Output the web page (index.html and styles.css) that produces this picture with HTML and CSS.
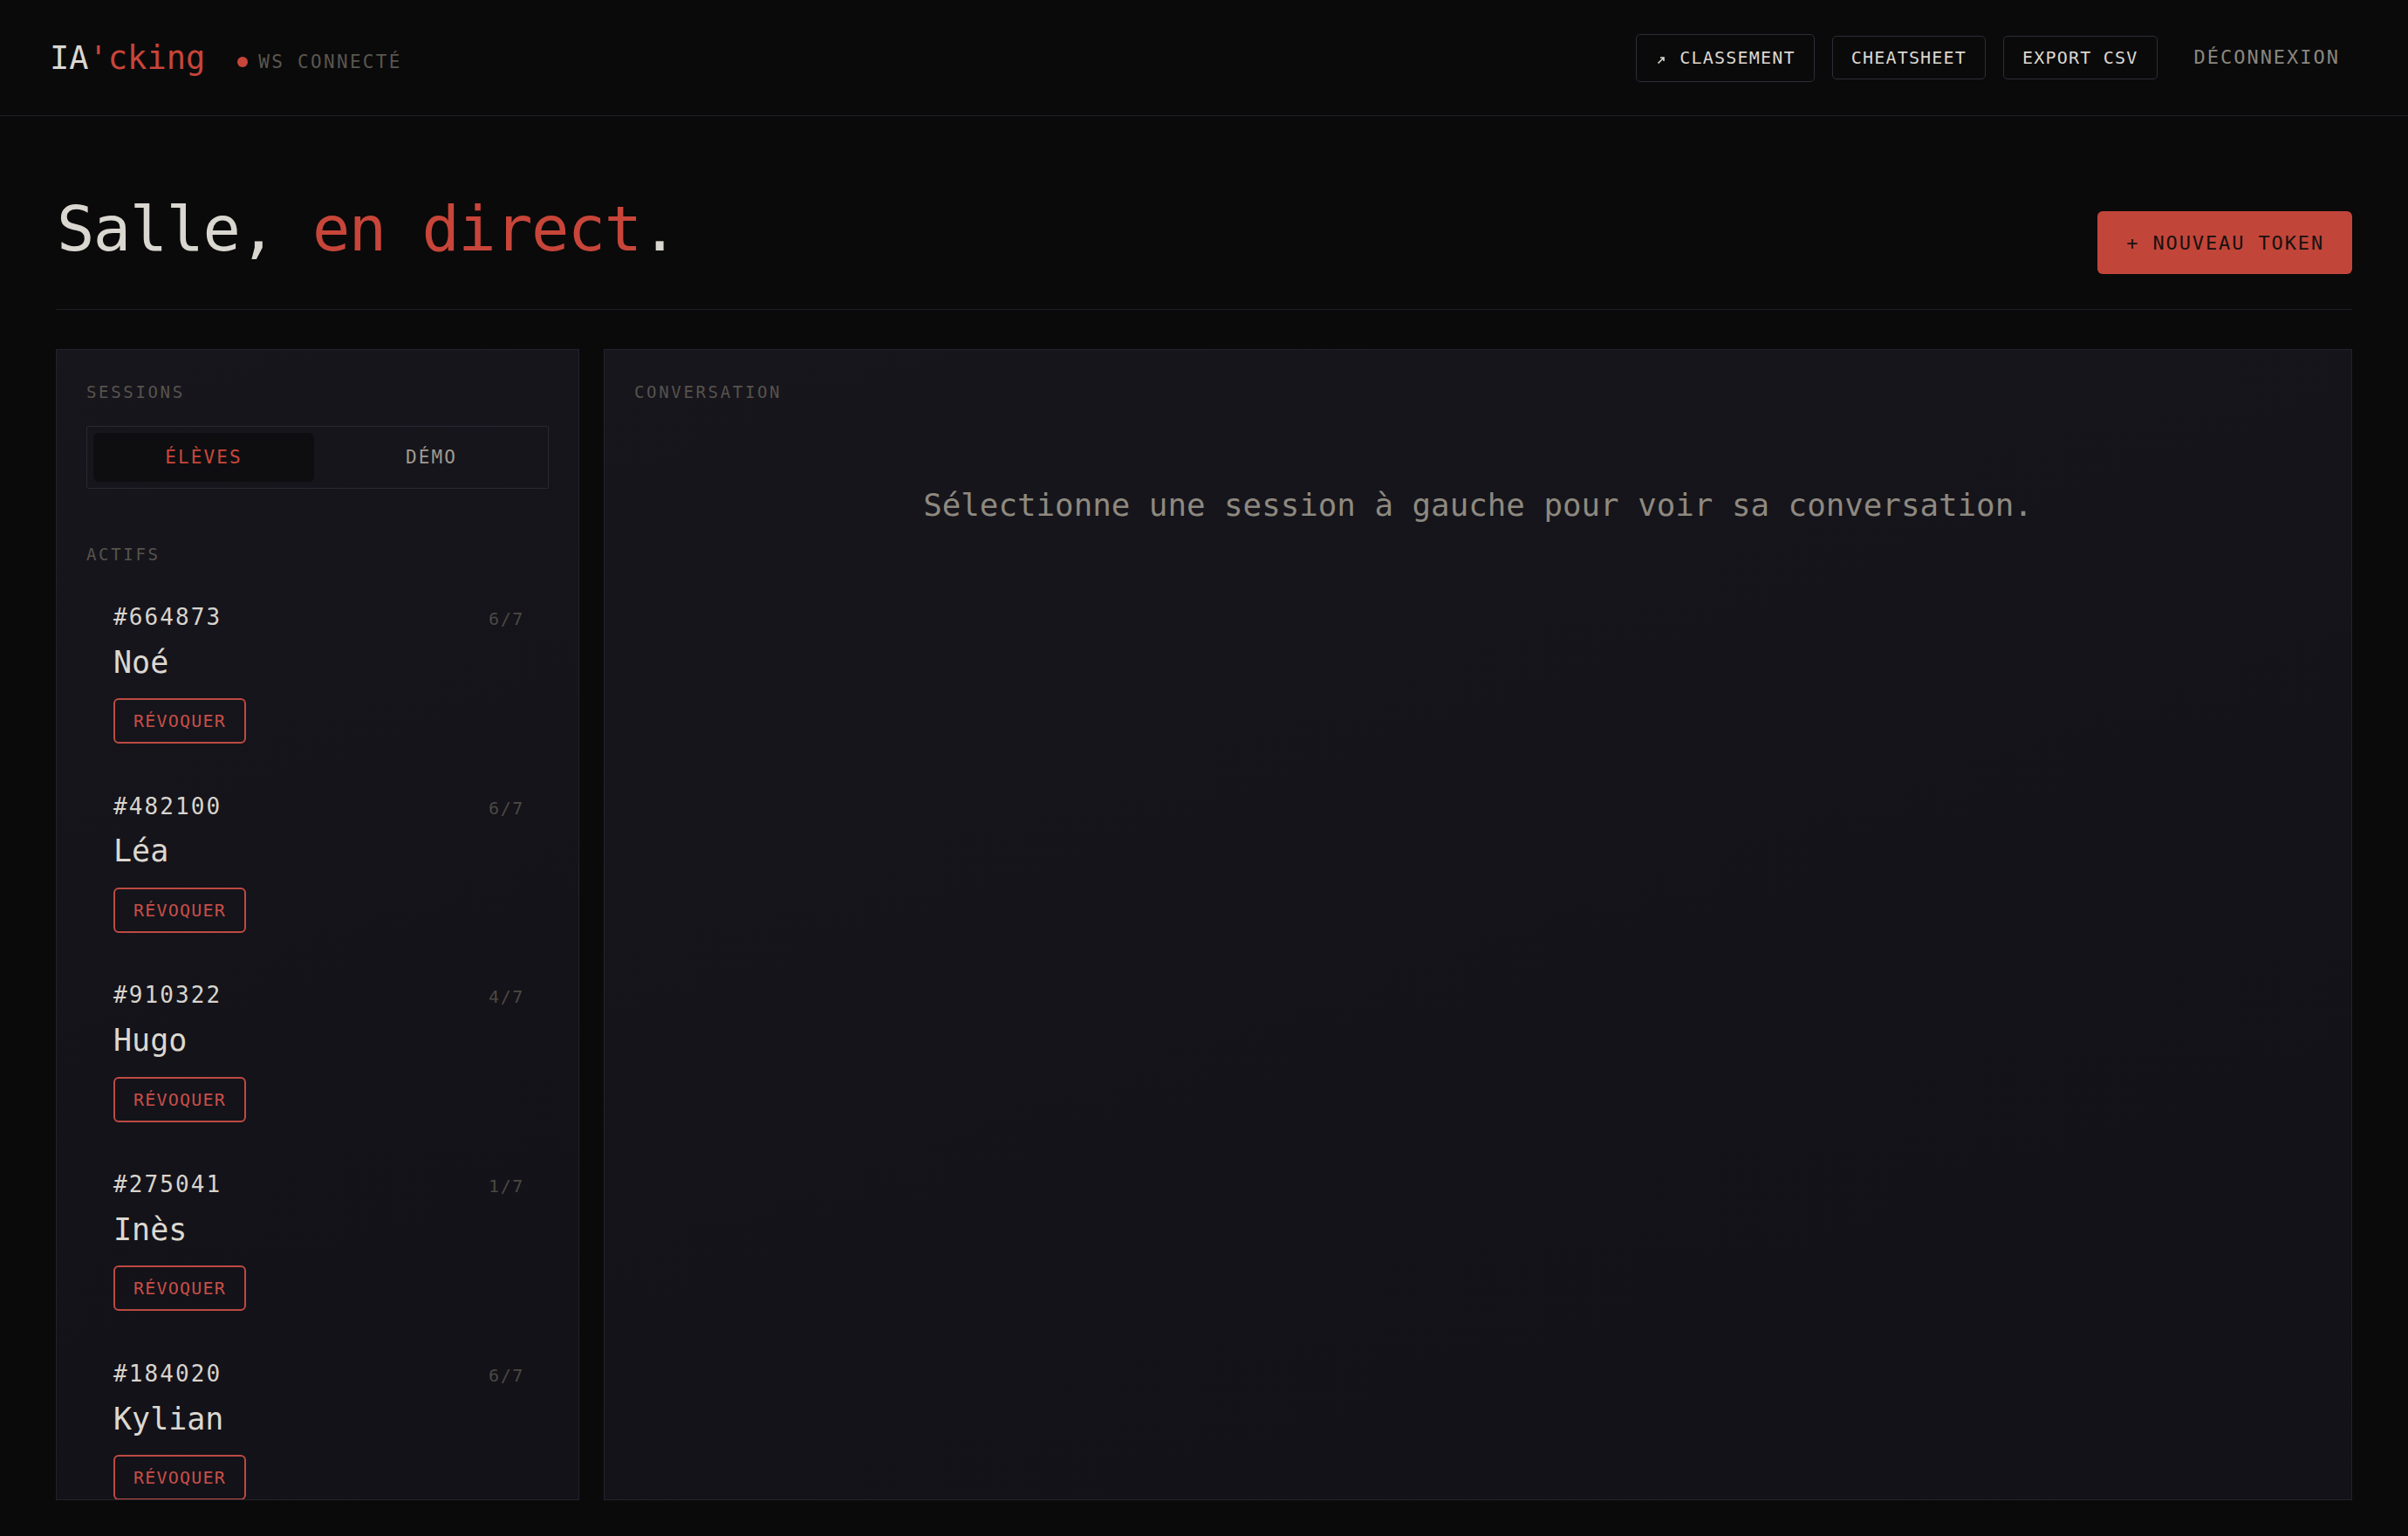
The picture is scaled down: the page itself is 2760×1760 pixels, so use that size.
FILE: index.html
```html
<!DOCTYPE html>
<html lang="fr">
<head>
    <meta charset="UTF-8">
    <title>IA'cking – Salle</title>
    <link rel="stylesheet" href="styles.css">
</head>
<body>
    <header class="topbar">
        <div class="brand">
            <span class="logo">IA<span class="accent">'cking</span></span>
            <span class="ws"><span class="ws-dot"></span>WS CONNECTÉ</span>
        </div>
        <nav class="nav">
            <button class="nav-btn tall"><svg class="arrow" viewBox="0 0 13 12" width="13" height="12"><path d="M3.5 10.5 L9.5 4.5 M6 4 H10 V8" /></svg> CLASSEMENT</button>
            <button class="nav-btn">CHEATSHEET</button>
            <button class="nav-btn">EXPORT CSV</button>
            <button class="nav-btn ghost">DÉCONNEXION</button>
        </nav>
    </header>

    <main class="page">
        <section class="hero">
            <h1 class="title">Salle, <span class="accent">en direct</span>.</h1>
            <button class="new-token">+ NOUVEAU TOKEN</button>
        </section>

        <section class="board">
            <aside class="panel sessions-panel">
                <h2 class="panel-label">SESSIONS</h2>
                <div class="tabs">
                    <button class="tab active">ÉLÈVES</button>
                    <button class="tab">DÉMO</button>
                </div>
                <h3 class="panel-label group-label">ACTIFS</h3>
                <ul class="sessions">
                    <li class="session">
                        <div class="session-head"><span class="sid">#664873</span><span class="quota">6/7</span></div>
                        <div class="name">Noé</div>
                        <button class="revoke">RÉVOQUER</button>
                    </li>
                    <li class="session">
                        <div class="session-head"><span class="sid">#482100</span><span class="quota">6/7</span></div>
                        <div class="name">Léa</div>
                        <button class="revoke">RÉVOQUER</button>
                    </li>
                    <li class="session">
                        <div class="session-head"><span class="sid">#910322</span><span class="quota">4/7</span></div>
                        <div class="name">Hugo</div>
                        <button class="revoke">RÉVOQUER</button>
                    </li>
                    <li class="session">
                        <div class="session-head"><span class="sid">#275041</span><span class="quota">1/7</span></div>
                        <div class="name">Inès</div>
                        <button class="revoke">RÉVOQUER</button>
                    </li>
                    <li class="session">
                        <div class="session-head"><span class="sid">#184020</span><span class="quota">6/7</span></div>
                        <div class="name">Kylian</div>
                        <button class="revoke">RÉVOQUER</button>
                    </li>
                </ul>
            </aside>

            <section class="panel conversation-panel">
                <h2 class="panel-label">CONVERSATION</h2>
                <p class="empty">Sélectionne une session à gauche pour voir sa conversation.</p>
            </section>
        </section>
    </main>
</body>
</html>
```

FILE: styles.css
```css
* {
    box-sizing: border-box;
}
html, body {
    height: 100%;
}
body {
    margin: 0;
    display: flex;
    flex-direction: column;
    overflow: hidden;
    background-color: #0a0a0a;
    color: #dcd8d0;
    font-family: "DejaVu Sans Mono", "Liberation Mono", monospace;
}
button {
    font-family: inherit;
    cursor: pointer;
}
.accent {
    color: #c8453a;
}

/* top bar */
.topbar {
    height: 133px;
    flex: none;
    display: flex;
    align-items: center;
    justify-content: space-between;
    padding: 0 56px 0 57px;
    border-bottom: 1px solid #1f1e27;
    background-color: #0a0a0b;
}
.brand {
    display: flex;
    align-items: center;
}
.logo {
    font-size: 37px;
    color: #dad7d0;
}
.ws {
    display: flex;
    align-items: center;
    gap: 12px;
    margin-left: 37px;
    margin-top: 10px;
    font-size: 21px;
    letter-spacing: 0.11em;
    color: #5a564f;
}
.ws-dot {
    width: 12px;
    height: 12px;
    border-radius: 50%;
    background-color: #c8453a;
}
.nav {
    display: flex;
    align-items: center;
    gap: 20px;
}
.nav-btn {
    padding: 12px 21px;
    line-height: 24px;
    font-size: 20px;
    letter-spacing: 0.06em;
    color: #dcd8d0;
    background: transparent;
    border: 1px solid #2e2d36;
    border-radius: 5px;
}
.nav-btn.tall {
    padding-top: 14.5px;
    padding-bottom: 14.5px;
}
.nav-btn .arrow {
    margin-right: 2px;
    vertical-align: -1px;
    fill: none;
    stroke: currentColor;
    stroke-width: 1.6;
}
.nav-btn.ghost {
    border-color: transparent;
    font-size: 22px;
    letter-spacing: 0.09em;
    color: #8c877e;
}

/* page */
.page {
    flex: 1;
    min-height: 0;
    display: flex;
    flex-direction: column;
    padding: 0 64px 41px;
}
.hero {
    display: flex;
    align-items: flex-end;
    justify-content: space-between;
    padding: 90px 0 40px;
    border-bottom: 1px solid #1f1e27;
}
.title {
    margin: 0 0 12px 1px;
    font-size: 72px;
    font-weight: 400;
    line-height: 1.1;
    letter-spacing: -1.5px;
    color: #dad7d0;
}
.new-token {
    height: 72px;
    padding: 0 32px 0 33px;
    font-size: 22px;
    letter-spacing: 0.085em;
    color: #17110f;
    background-color: #c2453a;
    border: none;
    border-radius: 6px;
}

/* panels */
.board {
    flex: 1;
    min-height: 0;
    display: grid;
    grid-template-columns: 600px 1fr;
    gap: 28px;
    margin-top: 45px;
}
.panel {
    min-height: 0;
    display: flex;
    flex-direction: column;
    overflow: hidden;
    padding: 37px 34px 0;
    background: linear-gradient(160deg, #17161d 0%, #141319 60%, #131218 100%);
    border: 1px solid #24232d;
}
.panel-label {
    margin: 0;
    font-size: 19px;
    font-weight: 400;
    line-height: 1.2;
    letter-spacing: 0.14em;
    color: #57534c;
}
.tabs {
    display: grid;
    grid-template-columns: 1fr 1fr;
    gap: 8px;
    margin-top: 27px;
    padding: 7px;
    border: 1px solid #2a2933;
    border-radius: 2px;
}
.tab {
    height: 56px;
    font-size: 21px;
    letter-spacing: 0.1em;
    color: #a19b91;
    background: transparent;
    border: none;
    border-radius: 6px;
}
.tab.active {
    color: #c9473b;
    background-color: #0e0e11;
}
.group-label {
    margin-top: 64px;
}
.sessions {
    flex: 1;
    min-height: 0;
    overflow: hidden;
    list-style: none;
    margin: 18px 0 0;
    padding: 0;
}
.session {
    padding: 26px 28px 29.5px 31px;
}
.session-head {
    display: flex;
    align-items: baseline;
    justify-content: space-between;
}
.sid {
    font-size: 26px;
    line-height: 1.3;
    letter-spacing: 0.08em;
    color: #d8d4cc;
}
.quota {
    font-size: 20px;
    letter-spacing: 0.08em;
    color: #4c4843;
}
.name {
    margin-top: 12px;
    font-size: 35px;
    line-height: 1.3;
    color: #dcd8d0;
}
.revoke {
    display: block;
    height: 52px;
    margin-top: 18px;
    padding: 0 21px;
    font-size: 20px;
    letter-spacing: 0.06em;
    color: #c84f49;
    background: transparent;
    border: 2px solid #bd4a42;
    border-radius: 6px;
}
.empty {
    margin: 91px 0 0;
    text-align: center;
    font-size: 35.8px;
    line-height: 1.5;
    color: #8e897f;
}
```
